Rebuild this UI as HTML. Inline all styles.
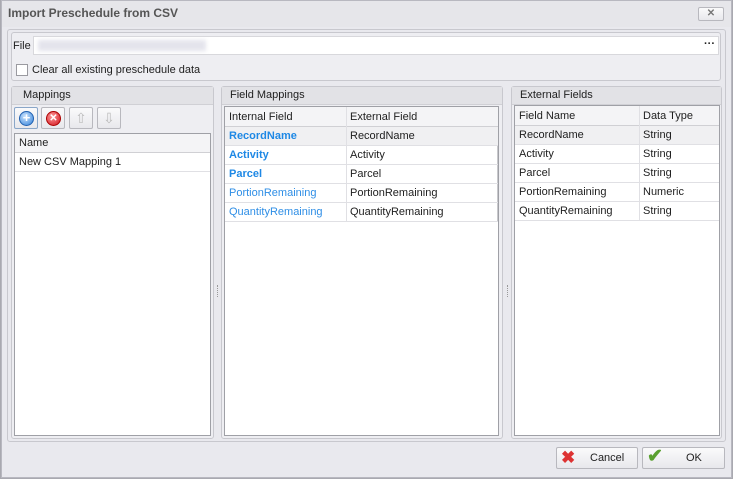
<!DOCTYPE html>
<html><head><style>
*{box-sizing:border-box;margin:0;padding:0}
body{width:733px;height:479px;overflow:hidden;background:#a9a9b0;font-family:"Liberation Sans",sans-serif;font-size:11px;color:#1e1e1e;position:relative}
.a{position:absolute}
.win{left:1px;top:0;width:731px;height:478px;background:#e9e9ee;border:1px solid #b8b8c0}
.grp{border:1px solid #c8c8ce;border-radius:3px;background:#eeeef2}
.hdr{background:#e2e2e6;border-bottom:1px solid #d0d0d5;height:18px;padding:2px 0 0 8px;font-size:11px}
.grid{background:#fff;border:1px solid #9fa0a6}
.row{position:absolute;left:0;right:0;height:19px;border-bottom:1px solid #e0e0e4;line-height:18px}
.row span{position:absolute;top:0}
.btn{border:1px solid #b8b8be;border-radius:2px;background:linear-gradient(#fafafb,#e8e8ec)}
.b{color:#1e88e5;font-weight:bold}
.l{color:#2e8ee6}
</style></head><body>
<div class="a win"></div>
<div class="a" style="left:2px;top:1px;width:729px;height:26px;background:#e6e6ea"></div>
<div class="a" style="left:8px;top:6px;font-weight:bold;font-size:12px;color:#555">Import Preschedule from CSV</div>
<div class="a btn" style="left:698px;top:7px;width:26px;height:14px;font-size:10px;text-align:center;line-height:12px;color:#777;font-weight:bold">✕</div>
<div class="a" style="left:7px;top:29px;width:719px;height:413px;border:1px solid #c8c8ce;border-radius:3px"></div>
<div class="a grp" style="left:11px;top:32px;width:710px;height:49px"></div>
<div class="a" style="left:13px;top:40px">File</div>
<div class="a" style="left:33px;top:36px;width:686px;height:19px;background:#fff;border:1px solid #d8d8dc"></div>
<div class="a" style="left:38px;top:40px;width:168px;height:11px;background:#e4e4ec;filter:blur(2px)"></div>
<div class="a" style="left:704px;top:38px;font-weight:bold">···</div>
<div class="a" style="left:16px;top:64px;width:12px;height:12px;background:#fff;border:1px solid #9a9aa0"></div>
<div class="a" style="left:32px;top:64px">Clear all existing preschedule data</div>

<div class="a grp" style="left:11px;top:86px;width:203px;height:353px"><div class="hdr" style="padding-left:11px">Mappings</div></div>
<div class="a btn" style="left:14px;top:107px;width:24px;height:22px;border-color:#8aa6c8"><div class="a" style="left:4px;top:3px;width:15px;height:15px;border-radius:50%;background:radial-gradient(circle at 40% 35%,#cfe6ff,#2f7fd8);border:1px solid #2060b0;color:#fff;font-size:13px;line-height:12px;text-align:center;font-weight:bold">+</div></div>
<div class="a btn" style="left:41px;top:107px;width:24px;height:22px"><div class="a" style="left:4px;top:3px;width:15px;height:15px;border-radius:50%;background:radial-gradient(circle at 40% 35%,#ff9a9a,#d0101a);border:1px solid #a00;color:#fff;font-size:10px;line-height:13px;text-align:center;font-weight:bold">✕</div></div>
<div class="a btn" style="left:69px;top:107px;width:24px;height:22px;color:#bbb;text-align:center;font-size:14px;line-height:20px">⇧</div>
<div class="a btn" style="left:97px;top:107px;width:24px;height:22px;color:#bbb;text-align:center;font-size:14px;line-height:20px">⇩</div>
<div class="a grid" style="left:14px;top:133px;width:197px;height:303px">
<div class="row" style="top:0;background:#f4f4f6;border-bottom-color:#d0d0d4"><span style="left:4px">Name</span></div>
<div class="row" style="top:19px"><span style="left:4px">New CSV Mapping 1</span></div></div>

<div class="a" style="left:217px;top:285px;width:2px;height:12px;border-left:1px dotted #999"></div>
<div class="a" style="left:507px;top:285px;width:2px;height:12px;border-left:1px dotted #999"></div>

<div class="a grp" style="left:221px;top:86px;width:282px;height:353px"><div class="hdr">Field Mappings</div></div>
<div class="a grid" style="left:224px;top:106px;width:275px;height:330px">
<div class="a" style="left:272px;top:0;width:1px;height:115px;background:#c8c8cc"></div>
<div class="row" style="top:0;height:20px;background:#f4f4f6;border-bottom-color:#d0d0d4"><span style="left:4px;top:1px">Internal Field</span><span style="left:125px;top:1px">External Field</span></div>
<div class="row" style="top:20px;background:#f0f0f2"><span class="b" style="left:4px">RecordName</span><span style="left:125px">RecordName</span></div>
<div class="row" style="top:39px"><span class="b" style="left:4px">Activity</span><span style="left:125px">Activity</span></div>
<div class="row" style="top:58px"><span class="b" style="left:4px">Parcel</span><span style="left:125px">Parcel</span></div>
<div class="row" style="top:77px"><span class="l" style="left:4px">PortionRemaining</span><span style="left:125px">PortionRemaining</span></div>
<div class="row" style="top:96px"><span class="l" style="left:4px">QuantityRemaining</span><span style="left:125px">QuantityRemaining</span></div>
<div class="a" style="left:121px;top:0;width:1px;height:115px;background:#e0e0e4"></div>
</div>

<div class="a grp" style="left:511px;top:86px;width:211px;height:353px"><div class="hdr">External Fields</div></div>
<div class="a grid" style="left:514px;top:105px;width:206px;height:331px">
<div class="row" style="top:0;height:20px;background:#f4f4f6;border-bottom-color:#d0d0d4"><span style="left:4px;top:1px">Field Name</span><span style="left:128px;top:1px">Data Type</span></div>
<div class="row" style="top:20px;background:#f0f0f2"><span style="left:4px">RecordName</span><span style="left:128px">String</span></div>
<div class="row" style="top:39px"><span style="left:4px">Activity</span><span style="left:128px">String</span></div>
<div class="row" style="top:58px"><span style="left:4px">Parcel</span><span style="left:128px">String</span></div>
<div class="row" style="top:77px"><span style="left:4px">PortionRemaining</span><span style="left:128px">Numeric</span></div>
<div class="row" style="top:96px"><span style="left:4px">QuantityRemaining</span><span style="left:128px">String</span></div>
<div class="a" style="left:124px;top:0;width:1px;height:115px;background:#e0e0e4"></div>
</div>

<div class="a btn" style="left:556px;top:447px;width:82px;height:22px"><span class="a" style="left:4px;top:0;color:#d33;font-size:17px;font-weight:bold;line-height:20px">✖</span><span class="a" style="left:33px;top:4px">Cancel</span></div>
<div class="a btn" style="left:642px;top:447px;width:83px;height:22px"><span class="a" style="left:4px;top:-1px;color:#5aa030;font-size:19px;font-weight:bold;line-height:20px">✔</span><span class="a" style="left:43px;top:4px">OK</span></div>
</body></html>
